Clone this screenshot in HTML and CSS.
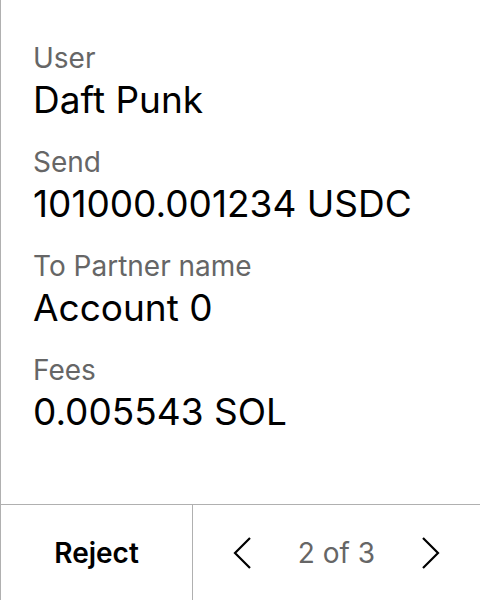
FILE: index.html
```html
<!DOCTYPE html>
<html>
<head>
<meta charset="utf-8">
<link rel="stylesheet" href="styles.css">
</head>
<body>
<div class="screen">
  <div class="details">
    <div class="field">
      <div class="label">User</div>
      <div class="value">Daft Punk</div>
    </div>
    <div class="field">
      <div class="label">Send</div>
      <div class="value">101000.001234 USDC</div>
    </div>
    <div class="field">
      <div class="label">To Partner name</div>
      <div class="value">Account 0</div>
    </div>
    <div class="field">
      <div class="label">Fees</div>
      <div class="value">0.005543 SOL</div>
    </div>
  </div>
  <div class="footer">
    <div class="reject">Reject</div>
    <div class="pager">
      <svg class="chev" width="18" height="32" viewBox="0 0 18 32"><path d="M17 1 L2 16 L17 31" fill="none" stroke="#000" stroke-width="2.2"/></svg>
      <span class="count">2 of 3</span>
      <svg class="chev" width="18" height="32" viewBox="0 0 18 32"><path d="M1 1 L16 16 L1 31" fill="none" stroke="#000" stroke-width="2.2"/></svg>
    </div>
  </div>
</div>
</body>
</html>
```
FILE: styles.css
```css
html, body {
  margin: 0;
  padding: 0;
  background: #fff;
}
.screen {
  width: 479px;
  height: 600px;
  border-left: 1px solid #b0b0b0;
  display: flex;
  flex-direction: column;
  font-family: Inter, "Noto Sans", sans-serif;
  color: #000;
}
.details {
  flex: 1;
  padding: 42px 32px 0 32px;
  display: flex;
  flex-direction: column;
  gap: 20px;
}
.label {
  font-size: 28px;
  line-height: 32px;
  color: #666;
}
.value {
  font-size: 37px;
  line-height: 52px;
  color: #000;
}
.footer {
  height: 95px;
  border-top: 1px solid #b0b0b0;
  display: flex;
}
.reject {
  width: 191px;
  border-right: 1px solid #b0b0b0;
  display: flex;
  align-items: center;
  justify-content: center;
  font-size: 28px;
  font-weight: 600;
}
.pager {
  flex: 1;
  display: flex;
  align-items: center;
  justify-content: space-between;
  padding: 0 40px;
}
.count {
  font-size: 28px;
  color: #666;
}
.chev {
  display: block;
}
```
